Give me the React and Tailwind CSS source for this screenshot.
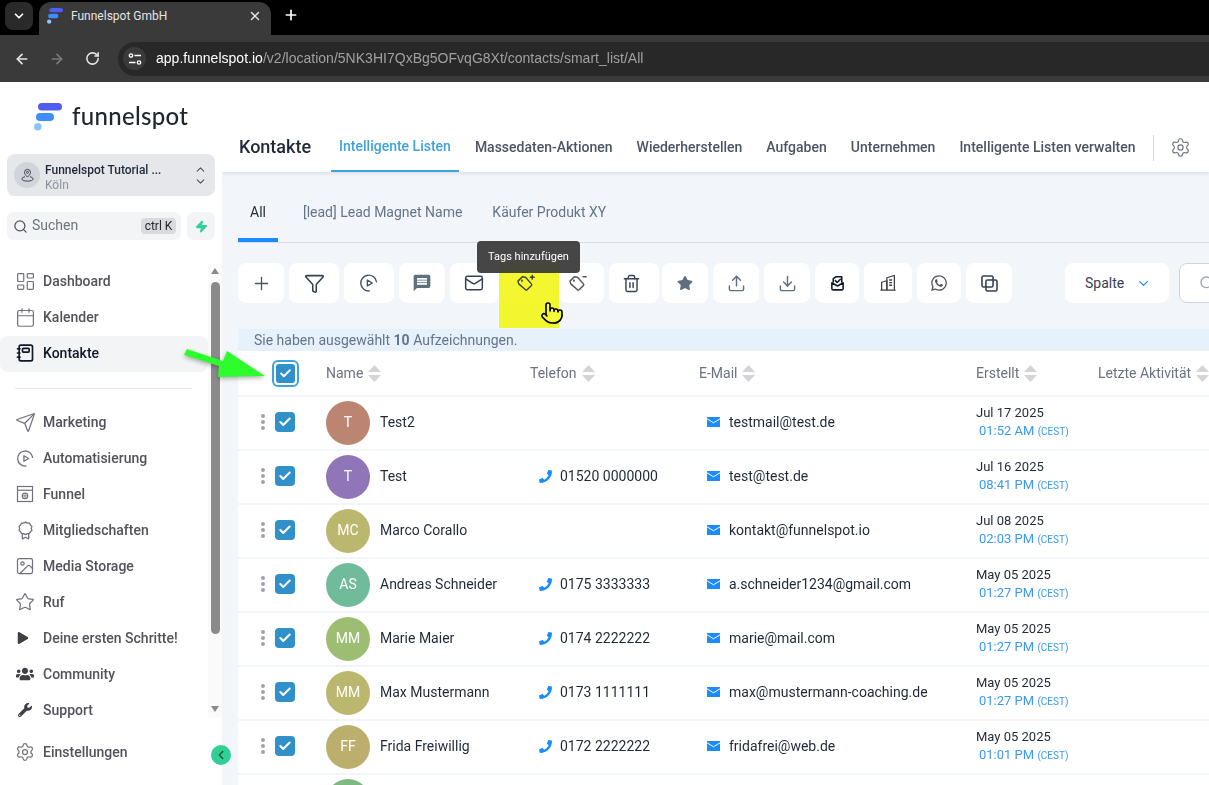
import React from "react";
import {
  ArrowLeft,
  ArrowRight,
  Check,
  ChevronDown,
  ChevronLeft,
  ChevronUp,
  Calendar,
  Download,
  Image,
  LayoutDashboard,
  Mail,
  Plus,
  Pointer,
  RotateCw,
  Search,
  Send,
  Settings,
  Star,
  Trash2,
  Upload,
  X,
  Zap,
  Funnel,
} from "lucide-react";
import { FaPhoneAlt, FaPlay, FaStar, FaUsers, FaWhatsapp, FaWrench } from "react-icons/fa";
import { MdMessage } from "react-icons/md";

const rows = [
  { initials: "T", color: "bg-[#bc8571]", name: "Test2", phone: "", email: "testmail@test.de", date: "Jul 17 2025", time: "01:52 AM" },
  { initials: "T", color: "bg-[#9075b9]", name: "Test", phone: "01520 0000000", email: "test@test.de", date: "Jul 16 2025", time: "08:41 PM" },
  { initials: "MC", color: "bg-[#bcb76f]", name: "Marco Corallo", phone: "", email: "kontakt@funnelspot.io", date: "Jul 08 2025", time: "02:03 PM" },
  { initials: "AS", color: "bg-[#6fbb9a]", name: "Andreas Schneider", phone: "0175 3333333", email: "a.schneider1234@gmail.com", date: "May 05 2025", time: "01:27 PM" },
  { initials: "MM", color: "bg-[#9cbd72]", name: "Marie Maier", phone: "0174 2222222", email: "marie@mail.com", date: "May 05 2025", time: "01:27 PM" },
  { initials: "MM", color: "bg-[#bcb76f]", name: "Max Mustermann", phone: "0173 1111111", email: "max@mustermann-coaching.de", date: "May 05 2025", time: "01:27 PM" },
  { initials: "FF", color: "bg-[#bcae6c]", name: "Frida Freiwillig", phone: "0172 2222222", email: "fridafrei@web.de", date: "May 05 2025", time: "01:01 PM" },
];

const LogoMark = ({ className }) => (
  <svg viewBox="0 0 28 28" className={className}>
    <rect x="4" y="0" width="24" height="7.5" rx="3.75" fill="#4f5df0" />
    <rect x="2" y="10" width="18" height="8" rx="4" fill="#3f8cff" />
    <circle cx="3.8" cy="23.8" r="3.8" fill="#8cc4ff" />
  </svg>
);

const AutomationIcon = ({ className }) => (
  <svg viewBox="0 0 24 24" fill="none" stroke="currentColor" strokeWidth="1.7" strokeLinecap="round" strokeLinejoin="round" className={className}>
    <path d="M21 10.5A9.5 9.5 0 1 0 12.5 21.500" />
    <path d="M10 8.500v7l6-3.500z" />
  </svg>
);

const ContactsIcon = ({ className }) => (
  <svg viewBox="0 0 24 24" fill="none" stroke="currentColor" strokeWidth="2" strokeLinecap="round" strokeLinejoin="round" className={className}>
    <rect x="5" y="2.500" width="16" height="19" rx="2" />
    <rect x="9" y="6.500" width="8" height="4.500" rx="1" />
    <path d="M3 7h3M3 12h3M3 17h3" />
  </svg>
);

const FunnelPageIcon = ({ className }) => (
  <svg viewBox="0 0 24 24" fill="none" stroke="currentColor" strokeWidth="1.6" className={className}>
    <rect x="2" y="2" width="20" height="20" />
    <path d="M2 7h20" />
    <circle cx="12" cy="14.500" r="3.600" />
    <path d="M8.400 14.500h7.200M12 11v7" strokeWidth="1" />
  </svg>
);

const BadgeIcon = ({ className }) => (
  <svg viewBox="0 0 24 24" fill="none" stroke="currentColor" strokeWidth="1.6" strokeLinejoin="round" className={className}>
    <path d="M12 1.500l2.400 1.200 2.700-.1 1.100 2.400 1.900 1.800-.8 2.600.8 2.500-1.900 1.800-1.100 2-2.700.2-2.400 1.300-2.400-1.300-2.700-.2-1.100-2-1.900-1.800.8-2.500-.8-2.600 1.900-1.800 1.100-2.400 2.700.1z" />
    <path d="M8 16.500V22.500l4-2 4 2v-6" />
  </svg>
);

const LocationIcon = ({ className }) => (
  <svg viewBox="0 0 24 24" fill="none" stroke="currentColor" strokeWidth="1.600" strokeLinejoin="round" className={className}>
    <path d="M12 14.500c-3-3-4.800-5-4.800-7.500a4.800 4.800 0 0 1 9.600 0c0 2.500-1.800 4.500-4.800 7.500z" />
    <circle cx="12" cy="7" r="1.600" />
    <path d="M8 14c-2.800.6-5 1.900-5 3.500 0 2 4 3.500 9 3.500s9-1.500 9-3.500c0-1.600-2.200-2.900-5-3.500" />
  </svg>
);

const TagIcon = ({ sign, className }) => (
  <svg viewBox="0 0 24 24" fill="none" stroke="currentColor" strokeWidth="1.800" strokeLinecap="round" strokeLinejoin="round" className={className}>
    <path d="M2.500 9L8 3.500l4 .5 7.500 8.500a1.500 1.500 0 0 1 0 2L14 20a1.500 1.500 0 0 1-2 0L3.500 12.500z" />
    <circle cx="7.500" cy="8.500" r=".5" />
    {sign === "plus" ? <path d="M20.500 1.500v5M18 4h5" /> : <path d="M19 3.500h4" />}
  </svg>
);

const MailCheckIcon = ({ className }) => (
  <svg viewBox="0 0 24 24" fill="none" stroke="currentColor" strokeWidth="2.200" strokeLinecap="round" strokeLinejoin="round" className={className}>
    <path d="M6 10V5l4-2.500h8V10" />
    <path d="M9 8l2.500 2.500L16 6" />
    <path d="M4 11v8a2 2 0 0 0 2 2h12a2 2 0 0 0 2-2v-8l-8 4.500z" />
  </svg>
);

const BuildingIcon = ({ className }) => (
  <svg viewBox="0 0 24 24" fill="none" stroke="currentColor" strokeWidth="1.700" strokeLinejoin="round" className={className}>
    <path d="M2 21.500h20" />
    <path d="M3.500 21.500V11l7-2v12.500" />
    <path d="M10.500 21.500V5l10-3v19.500" />
    <path d="M13.500 8h4M13.500 11.500h4M13.500 15h4" />
  </svg>
);

const CopyIcon = ({ className }) => (
  <svg viewBox="0 0 24 24" fill="none" stroke="currentColor" strokeWidth="2" strokeLinejoin="round" className={className}>
    <rect x="2.500" y="2.500" width="14" height="14" rx="2" />
    <rect x="7.500" y="7.500" width="14" height="14" rx="2" />
  </svg>
);

const SiteInfoIcon = () => (
  <svg viewBox="0 0 14 14" fill="none" stroke="#fff" strokeWidth="1.300" className="h-[14px] w-[14px]">
    <circle cx="3" cy="3.500" r="1.700" />
    <path d="M6.500 3.500H13M1 10.500h6.500" />
    <circle cx="11" cy="10.500" r="1.700" />
  </svg>
);

const SortIcon = () => (
  <svg viewBox="0 0 13 17" className="ml-[5px] h-[17px] w-[13px] shrink-0" fill="#d4d4d8">
    <path d="M6.500 0L13 7H0z" />
    <path d="M6.500 17L0 10h13z" />
  </svg>
);

const EnvelopeIcon = () => (
  <svg viewBox="0 0 13 10" className="h-[10px] w-[13px] shrink-0">
    <rect width="13" height="10" fill="#1a8cff" />
    <path d="M0 1.800l6.500 4 6.500-4" fill="none" stroke="#fff" strokeWidth="1" />
  </svg>
);

const NavItem = ({ icon, label, active }) => (
  <div className={`flex h-9 items-center gap-[9px] rounded-lg pb-[2px] pl-[16px] text-sm font-medium ${active ? "bg-[#f3f4f6] text-[#111827]" : "text-[#52525b]"}`}>
    <span className={`flex w-[18px] shrink-0 justify-center ${active ? "text-[#111827]" : "text-[#71717a]"}`}>{icon}</span>
    {label}
  </div>
);

const ToolButton = ({ width, children, className = "" }) => (
  <button className={`flex h-10 shrink-0 items-center justify-center rounded-lg bg-white ${width} ${className}`}>{children}</button>
);

const Checkbox = () => (
  <span className="flex h-5 w-5 items-center justify-center rounded-[4px] bg-[#3090c9]">
    <Check size={14} strokeWidth={3.500} className="text-white" />
  </span>
);

const HeaderCell = ({ label }) => (
  <div className="flex items-center text-sm text-[#6b7280]">
    {label}
    <SortIcon />
  </div>
);

const Sidebar = () => (
  <aside className="relative flex w-[222px] shrink-0 flex-col bg-white">
    <div className="flex h-[72px] shrink-0 items-start pl-[34px] pt-[21px]">
      <LogoMark className="h-[28px] w-[28px]" />
      <span className="ml-[10px] font-['Lato',sans-serif] text-[24px] font-medium leading-[26px] tracking-[0.3px] text-[#1e2430]">funnelspot</span>
    </div>

    <div className="mx-[7px] flex h-[42px] shrink-0 items-center rounded-lg bg-[#e5e7eb] pl-[7px] pr-[8px]">
      <span className="flex h-[26px] w-[26px] items-center justify-center rounded-full bg-[#d1d5db]">
        <LocationIcon className="h-[15px] w-[15px] text-[#3f3f46]" />
      </span>
      <div className="ml-[5px] flex-1 pt-[5px] text-xs leading-[15px]">
        <div className="font-medium text-[#1f2937]">Funnelspot Tutorial ...</div>
        <div className="text-[#8b93a1]">Köln</div>
      </div>
      <div className="flex flex-col text-[#52525b]">
        <ChevronUp size={13} className="-mb-[1px]" />
        <ChevronDown size={13} />
      </div>
    </div>

    <div className="mx-[7px] mt-4 flex h-7 shrink-0 gap-[6px]">
      <div className="flex flex-1 items-center rounded-md bg-[#f3f4f6] pl-[6px] pr-[5px]">
        <Search size={15} className="text-[#52525b]" />
        <span className="ml-[4px] flex-1 pb-[2px] text-sm text-[#6b7280]">Suchen</span>
        <span className="flex h-4 w-[35px] items-center justify-center rounded-sm bg-[#d8dae0] text-xs text-[#27272a]">ctrl K</span>
      </div>
      <div className="flex w-7 items-center justify-center rounded-md bg-[#f3f4f6]">
        <Zap size={13} className="fill-[#2fcf96] text-[#2fcf96]" />
      </div>
    </div>

    <div className="mt-6 flex h-[464px] shrink-0">
      <nav className="w-[208px] shrink-0">
        <NavItem icon={<LayoutDashboard size={21} strokeWidth={1.400} className="shrink-0" />} label="Dashboard" />
        <NavItem icon={<Calendar size={21} strokeWidth={1.400} className="shrink-0" />} label="Kalender" />
        <NavItem active icon={<ContactsIcon className="h-5 w-5 shrink-0" />} label="Kontakte" />
        <div className="mx-[15px] my-4 h-px w-[177px] bg-[#e5e7eb]" />
        <NavItem icon={<Send size={21} strokeWidth={1.400} className="shrink-0" />} label="Marketing" />
        <NavItem icon={<AutomationIcon className="h-[19px] w-[19px] shrink-0" />} label="Automatisierung" />
        <NavItem icon={<FunnelPageIcon className="h-[18px] w-[18px] shrink-0" />} label="Funnel" />
        <NavItem icon={<BadgeIcon className="h-[19px] w-[19px] shrink-0" />} label="Mitgliedschaften" />
        <NavItem icon={<Image size={20} strokeWidth={1.500} className="shrink-0" />} label="Media Storage" />
        <NavItem icon={<Star size={20} strokeWidth={1.500} className="shrink-0" />} label="Ruf" />
        <NavItem icon={<FaPlay size={12} className="-ml-[5px] text-[#3f3f46]" />} label="Deine ersten Schritte!" />
        <NavItem icon={<FaUsers size={18} className="text-[#3f3f46]" />} label="Community" />
        <NavItem icon={<FaWrench size={14} className="text-[#3f3f46]" />} label="Support" />
      </nav>
      <div className="flex h-[454px] w-[14px] flex-col items-center bg-[#fafafa]">
        <div className="mt-[4px] h-0 w-0 border-x-[4.500px] border-b-[6px] border-x-transparent border-b-[#8a8a8a]" />
        <div className="mt-[8px] h-[352px] w-[9px] rounded-full bg-[#8a8a8a]" />
        <div className="mt-[72px] h-0 w-0 border-x-[4.500px] border-t-[6px] border-x-transparent border-t-[#8a8a8a]" />
      </div>
    </div>

    <div className="mt-[7px]">
      <NavItem icon={<Settings size={20} strokeWidth={1.500} className="shrink-0" />} label="Einstellungen" />
    </div>

    <button className="absolute left-[211px] top-[663px] z-10 flex h-5 w-5 items-center justify-center rounded-full bg-[#2fcf96]">
      <ChevronLeft size={14} strokeWidth={2.200} className="text-[#14532d]" />
    </button>
  </aside>
);

const Header = () => (
  <header className="relative z-10 flex h-[90px] shrink-0 items-end bg-white pl-[17px] shadow-[0_1px_4px_rgba(0,0,0,0.12)]">
    <div className="flex h-[46px] items-start pt-[7px] text-lg font-medium text-[#1f2937]">Kontakte</div>
    <div className="ml-[20px] flex gap-2 text-sm font-medium text-[#4b5563]">
      <div className="h-[46px] border-b-2 border-[#3ea3dc] px-2 pt-[10px] text-[#3ea3dc]">Intelligente Listen</div>
      <div className="px-2 pt-[11px]">Massedaten-Aktionen</div>
      <div className="px-2 pt-[11px]">Wiederherstellen</div>
      <div className="px-2 pt-[11px]">Aufgaben</div>
      <div className="px-2 pt-[11px]">Unternehmen</div>
      <div className="px-2 pt-[11px]">Intelligente Listen verwalten</div>
    </div>
    <div className="mb-[11px] ml-[9px] h-[26px] w-px bg-[#d1d5db]" />
    <Settings size={21} strokeWidth={1.300} className="mb-[14px] ml-[16px] text-[#6b7280]" />
  </header>
);

const Toolbar = () => (
  <div className="mt-[20px] flex gap-[5px] text-[#475569]">
    <ToolButton width="w-[46px]"><Plus size={21} strokeWidth={1.500} /></ToolButton>
    <ToolButton width="w-[50px]"><Funnel size={21} strokeWidth={1.800} className="text-[#374151]" /></ToolButton>
    <ToolButton width="w-[50px]"><AutomationIcon className="h-5 w-5" /></ToolButton>
    <ToolButton width="w-[46px]"><MdMessage size={20} className="text-[#5f6f7e]" /></ToolButton>
    <ToolButton width="w-[49px]"><Mail size={20} strokeWidth={1.800} className="-ml-[2px] text-[#374151]" /></ToolButton>
    <ToolButton width="w-[50px]"><TagIcon sign="plus" className="-ml-[8px] h-[19px] w-[19px] text-[#374151]" /></ToolButton>
    <ToolButton width="w-[45px]"><TagIcon sign="minus" className="-ml-[8px] h-[19px] w-[19px] text-[#52525b]" /></ToolButton>
    <ToolButton width="w-[50px]"><Trash2 size={19} strokeWidth={1.800} className="-ml-[6px] text-[#374151]" /></ToolButton>
    <ToolButton width="w-[46px]" className="-ml-[2px]"><FaStar size={16} className="text-[#5f6f7e]" /></ToolButton>
    <ToolButton width="w-[46px]"><Upload size={19} strokeWidth={1.800} className="text-[#5f6f7e]" /></ToolButton>
    <ToolButton width="w-[46px]"><Download size={19} strokeWidth={1.800} className="text-[#5f6f7e]" /></ToolButton>
    <ToolButton width="w-[44px]"><MailCheckIcon className="h-[17px] w-[17px] text-[#111827]" /></ToolButton>
    <ToolButton width="w-[48px]"><BuildingIcon className="h-[18px] w-[18px] text-[#3f3f46]" /></ToolButton>
    <ToolButton width="w-[44px]"><FaWhatsapp size={18} className="text-[#52525b]" /></ToolButton>
    <ToolButton width="w-[46px]"><CopyIcon className="h-[19px] w-[19px] text-[#374151]" /></ToolButton>
    <div className="ml-[48px] flex h-10 w-[104px] shrink-0 items-center gap-[12px] rounded-lg bg-white pl-[20px] text-sm text-[#374151]">
      Spalte
      <ChevronDown size={15} className="text-[#1a8cff]" />
    </div>
    <div className="ml-[5px] flex h-10 w-[200px] shrink-0 items-center rounded-lg border border-[#d1d5db] bg-white pl-[19px]">
      <Search size={16} className="text-[#9ca3af]" />
    </div>
  </div>
);

const ContactRow = ({ row }) => (
  <div className="grid h-[52px] grid-cols-[88px_204px_169px_277px_122px_1fr] items-center bg-white">
    <div className="flex items-center gap-[10px] pb-[2px] pl-[23px]">
      <span className="flex flex-col gap-[2px]">
        <span className="h-[4px] w-[4px] rounded-full bg-[#a1a1aa]" />
        <span className="h-[4px] w-[4px] rounded-full bg-[#a1a1aa]" />
        <span className="h-[4px] w-[4px] rounded-full bg-[#a1a1aa]" />
      </span>
      <Checkbox />
    </div>
    <div className="flex items-center gap-[10px] text-sm text-[#1f2937]">
      <span className={`flex h-11 w-11 shrink-0 items-center justify-center rounded-full pb-[2px] text-sm text-white ${row.color}`}>{row.initials}</span>
      <span className="pb-[2px]">{row.name}</span>
    </div>
    <div className="flex items-center gap-[8px] pb-[2px] pl-[9px] text-sm text-[#1f2937]">
      {row.phone && <FaPhoneAlt size={13} className="-scale-x-100 text-[#1a8cff]" />}
      {row.phone}
    </div>
    <div className="flex items-center gap-[9px] pb-[2px] pl-[8px] text-sm text-[#1f2937]">
      <EnvelopeIcon />
      {row.email}
    </div>
    <div className="pb-[2px] text-[13px] leading-[18px] text-[#1f2937]">
      <div>{row.date}</div>
      <div className="ml-[3px] whitespace-nowrap text-[#3b9aef]">
        {row.time} <span className="text-[10px]">(CEST)</span>
      </div>
    </div>
    <div />
  </div>
);

const Main = () => (
  <main className="flex min-w-0 flex-1 flex-col overflow-hidden bg-[#f2f6fa]">
    <Header />
    <div className="relative min-w-0 flex-1 overflow-hidden pl-4">
      <div className="flex h-[71px] w-[1100px] items-end border-b border-[#d8dee6] text-sm text-[#64748b]">
        <div className="h-[47px] border-b-4 border-[#1a8cff] px-3 pt-[7px] text-[#1f2937]">All</div>
        <div className="ml-[13px] h-[47px] px-3 pt-[7px]">[lead] Lead Magnet Name</div>
        <div className="ml-[6px] h-[47px] px-3 pt-[7px]">Käufer Produkt XY</div>
      </div>

      <Toolbar />

      <div className="mt-[26px] flex h-[22px] w-[1100px] items-center bg-[#e6f1fb] pl-4 text-sm text-[#64748b]">
        <span>Sie haben ausgewählt <b className="font-bold">10</b> Aufzeichnungen.</span>
      </div>

      <div className="flex w-[1100px] flex-col gap-[2px]">
        <div className="grid h-[44px] grid-cols-[88px_204px_169px_277px_122px_1fr] items-center bg-white">
          <div className="pl-[34px]">
            <span className="flex h-[27px] w-[27px] items-center justify-center rounded-md border-2 border-[#3ea3dc] bg-white">
              <span className="flex h-[19px] w-[19px] items-center justify-center rounded-[3px] bg-[#3090c9]">
                <Check size={13} strokeWidth={3.500} className="text-white" />
              </span>
            </span>
          </div>
          <HeaderCell label="Name" />
          <HeaderCell label="Telefon" />
          <HeaderCell label="E-Mail" />
          <HeaderCell label="Erstellt" />
          <HeaderCell label="Letzte Aktivität" />
        </div>
        {rows.map((row, i) => (
          <ContactRow key={i} row={row} />
        ))}
        <div className="flex h-[52px] items-start bg-white pl-[88px] pt-[4px]">
          <span className="h-11 w-11 rounded-full bg-[#7fb97f]" />
        </div>
      </div>

      {/* yellow marker and tooltip over the tag button */}
      <div className="absolute left-[277px] top-[91px] h-[65px] w-[60px] bg-[#f4f72f] mix-blend-darken" />
      <div className="absolute left-[255px] top-[69px] flex h-8 w-[103px] items-center justify-center rounded-[4px] bg-[#3c3c3c]/95 text-[11px] text-white">Tags hinzufügen</div>
      <Pointer size={24} strokeWidth={1.600} className="absolute left-[318px] top-[129px] fill-[#f6f93a] text-black" />
    </div>
  </main>
);

const BrowserChrome = () => (
  <div className="shrink-0 bg-[#3a3a3a] font-['Liberation_Sans',sans-serif]">
    <div className="flex h-[35px] items-start bg-black pl-[5px] pt-[2px]">
      <button className="flex h-[28px] w-[28px] items-center justify-center rounded-lg bg-[#2a2a2a] text-white">
        <ChevronDown size={14} strokeWidth={3} />
      </button>
      <div className="ml-[6px] flex h-[33px] w-[232px] items-center rounded-t-xl bg-[#3a3a3a] pb-[5px] pl-[8px] pr-[9px] text-xs text-[#e5e5e5]">
        <LogoMark className="h-4 w-4" />
        <span className="ml-[8px] flex-1 font-['Roboto',sans-serif]">Funnelspot GmbH</span>
        <X size={14} strokeWidth={2.500} />
      </div>
      <Plus size={16} strokeWidth={2.500} className="ml-[12px] mt-[5px] text-white" />
    </div>
    <div className="flex h-[47px] items-center pl-[14px]">
      <ArrowLeft size={16} strokeWidth={2.500} className="text-[#e5e5e5]" />
      <ArrowRight size={16} strokeWidth={2.500} className="ml-[19px] text-[#7a7a7a]" />
      <RotateCw size={15} strokeWidth={2.500} className="ml-[20px] text-[#e5e5e5]" />
      <div className="ml-[18px] flex h-[34px] flex-1 items-center rounded-l-full bg-[#282828] pl-[5px]">
        <span className="flex h-[23px] w-[23px] items-center justify-center rounded-full bg-[#3a3a3a]">
          <SiteInfoIcon />
        </span>
        <span className="ml-[10px] pb-[2px] text-sm tracking-[0.015px] text-white">
          app.funnelspot.io<span className="text-[#a0a0a0]">/v2/location/5NK3HI7QxBg5OFvqG8Xt/contacts/smart_list/All</span>
        </span>
      </div>
    </div>
  </div>
);

const App = () => (
  <div className="relative flex h-screen w-full flex-col overflow-hidden font-['Roboto',sans-serif]">
    <BrowserChrome />
    <div className="flex min-h-0 flex-1">
      <Sidebar />
      <Main />
    </div>
    {/* green annotation arrow */}
    <svg viewBox="0 0 100 40" className="pointer-events-none absolute left-[180px] top-[345px] h-[40px] w-[100px] drop-shadow-[0_2px_2px_rgba(0,0,0,0.3)]">
      <path d="M7 4L43 16 47 6 85 31 38 32 39 21 4 10z" fill="#2dfc2d" />
    </svg>
  </div>
);

export default App;
